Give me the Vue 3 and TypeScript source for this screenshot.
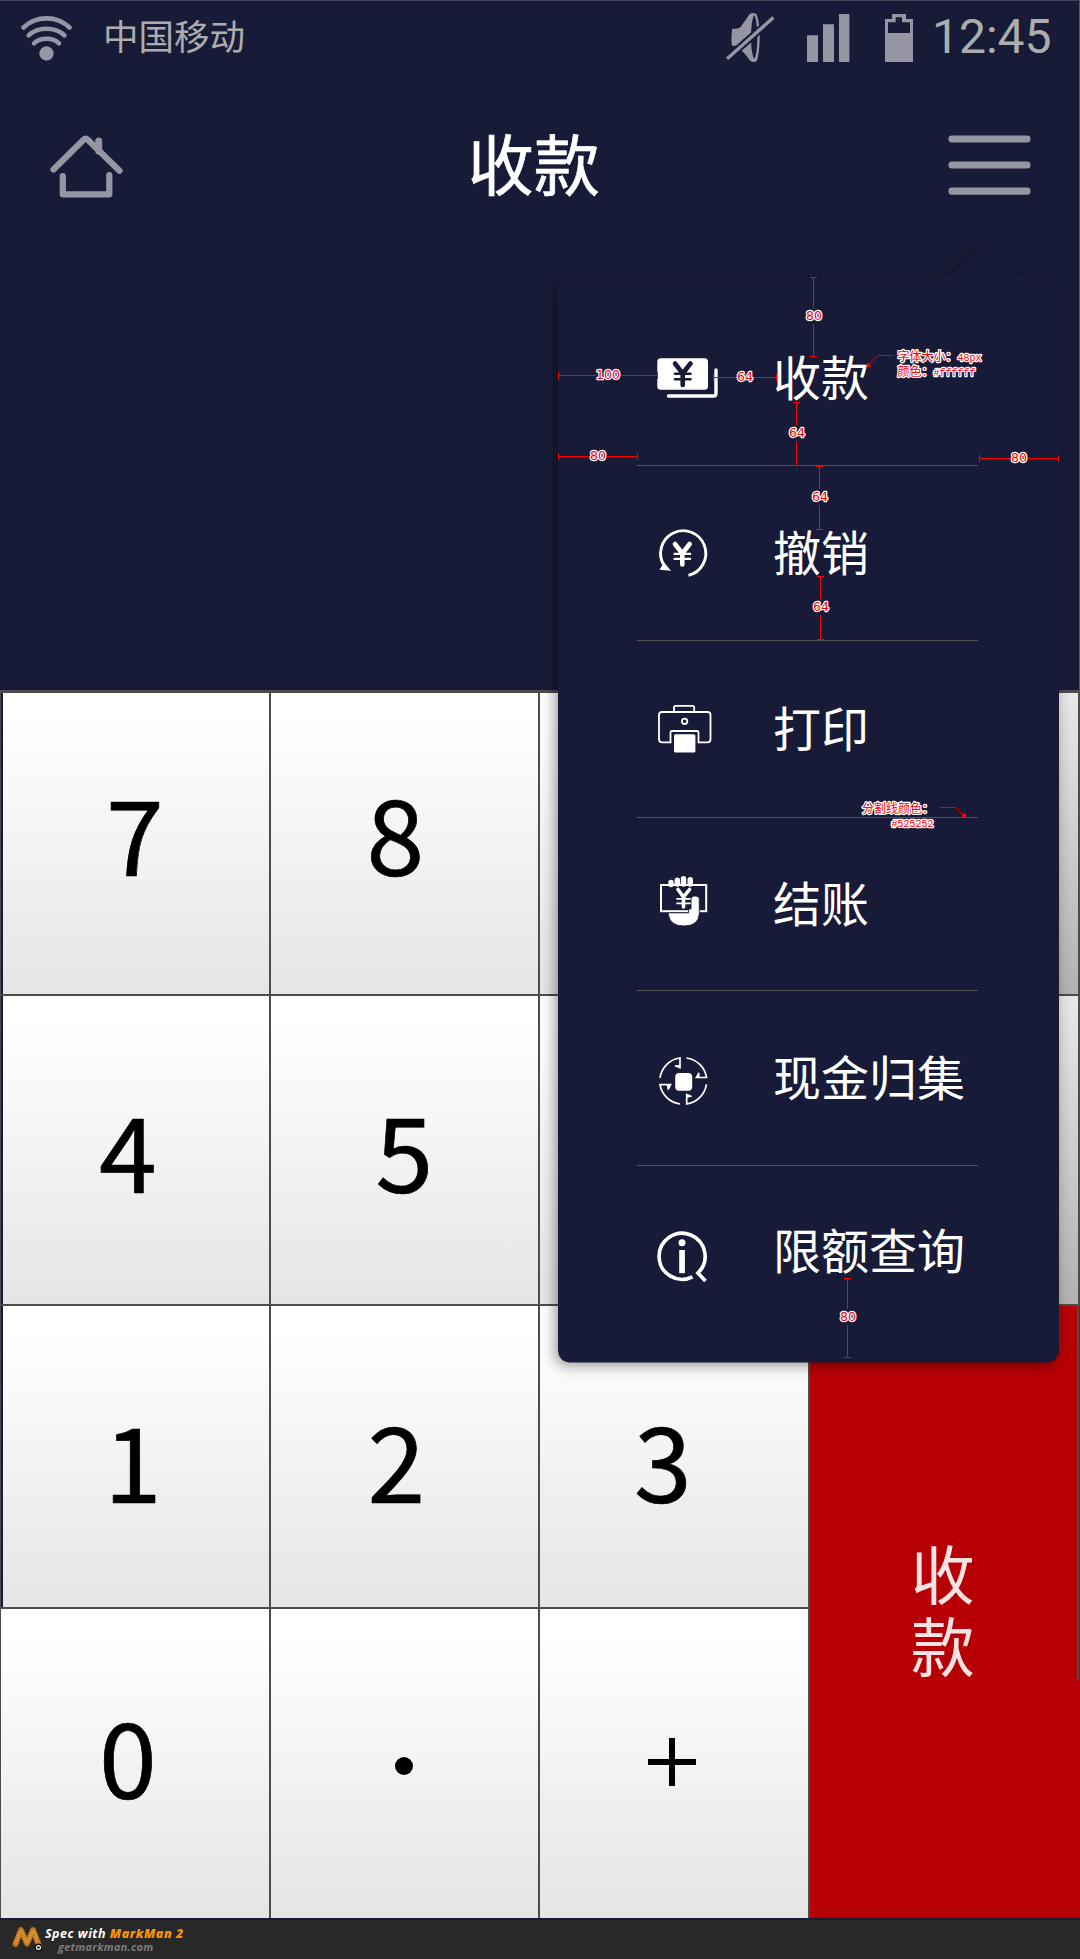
<script setup lang="ts">
type MenuIcon = 'cash' | 'undo' | 'print' | 'settle' | 'collect' | 'query'

interface MenuEntry {
  icon: MenuIcon
  label: string
  top: number
  height: number
}

interface KeyCell {
  label: string
  dx: number
  dy: number
  kind?: 'dot' | 'plus' | 'grey' | 'blank'
}

interface Measure {
  x1: number
  y1: number
  x2: number
  y2: number
  text: string
  cx: number
  cy: number
}

const menu: MenuEntry[] = [
  { icon: 'cash', label: '收款', top: 278, height: 187 },
  { icon: 'undo', label: '撤销', top: 466, height: 174 },
  { icon: 'print', label: '打印', top: 641, height: 176 },
  { icon: 'settle', label: '结账', top: 818, height: 172 },
  { icon: 'collect', label: '现金归集', top: 991, height: 174 },
  { icon: 'query', label: '限额查询', top: 1166, height: 196 },
]

const upperKeys: KeyCell[] = [
  { label: '7', dx: -1, dy: -6 },
  { label: '8', dx: -9, dy: -6 },
  { label: '', dx: 0, dy: 0, kind: 'blank' },
  { label: '', dx: 0, dy: 0, kind: 'grey' },
  { label: '4', dx: -8, dy: 5 },
  { label: '5', dx: 0, dy: 5 },
  { label: '', dx: 0, dy: 0, kind: 'blank' },
  { label: '', dx: 0, dy: 0, kind: 'grey' },
]

const lowerKeys: KeyCell[] = [
  { label: '1', dx: -3, dy: 8 },
  { label: '2', dx: -8, dy: 8 },
  { label: '3', dx: -11, dy: 8 },
  { label: '0', dx: -7, dy: -3 },
  { label: '', dx: 0, dy: 0, kind: 'dot' },
  { label: '', dx: 0, dy: 0, kind: 'plus' },
]

const measures: Measure[] = [
  { x1: 813.5, y1: 277.5, x2: 813.5, y2: 356.5, text: '80', cx: 814, cy: 315 },
  { x1: 558.5, y1: 375.5, x2: 657.5, y2: 375.5, text: '100', cx: 608, cy: 374 },
  { x1: 713.5, y1: 377.5, x2: 776.5, y2: 377.5, text: '64', cx: 745, cy: 376 },
  { x1: 796.5, y1: 402.5, x2: 796.5, y2: 465.5, text: '64', cx: 797, cy: 432 },
  { x1: 558.5, y1: 456.5, x2: 637.5, y2: 456.5, text: '80', cx: 598, cy: 455 },
  { x1: 979.5, y1: 458.5, x2: 1058.5, y2: 458.5, text: '80', cx: 1019, cy: 457 },
  { x1: 819.5, y1: 466.5, x2: 819.5, y2: 529.5, text: '64', cx: 820, cy: 496 },
  { x1: 820.5, y1: 576.5, x2: 820.5, y2: 639.5, text: '64', cx: 821, cy: 606 },
  { x1: 847.5, y1: 1278.5, x2: 847.5, y2: 1357.5, text: '80', cx: 848, cy: 1316 },
]

function measurePath(m: Measure): string {
  if (m.x1 === m.x2) {
    const caps = `M${m.x1 - 3.5} ${m.y1}h7M${m.x1 - 3.5} ${m.y2}h7`
    return `${caps}M${m.x1} ${m.y1}V${m.cy - 7}M${m.x1} ${m.cy + 9}V${m.y2}`
  }
  const half = m.text.length * 4
  const caps = `M${m.x1} ${m.y1 - 3.5}v7M${m.x2} ${m.y1 - 3.5}v7`
  return `${caps}M${m.x1} ${m.y1}H${m.cx - half}M${m.cx + half} ${m.y1}H${m.x2}`
}

function nudge(k: KeyCell): Record<string, string> {
  return { marginLeft: `${k.dx * 2}px`, marginTop: `${k.dy * 2 - 14}px` }
}
</script>

<template>
  <div class="screen">
    <header class="top">
      <div class="status">
        <svg class="wifi" width="52" height="50" viewBox="20 13 52 50" fill="none" stroke="#9595a3" stroke-width="4.6" stroke-linecap="round">
          <path d="M23.5 27.5Q33 18.4 46.5 18.4T69.5 27.5" />
          <path d="M28.7 35.3Q35.5 28.7 46.5 28.7T64.4 35.3" />
          <path d="M34 43.3Q38.5 38.7 46.5 38.7T59 43.3" />
          <circle cx="46.5" cy="53.5" r="7.2" fill="#9595a3" stroke="none" />
        </svg>
        <span class="carrier">中国移动</span>
        <svg class="signals" width="190" height="52" viewBox="725 10 190 52" fill="#9595a3">
          <g transform="translate(540 0) scale(.34435 .3333)">
            <path fill-rule="evenodd" d="M558 80Q572 82 582 76Q597 54 609 36Q622 29 630 38Q638 64 638 106Q638 150 630 176Q620 184 610 176Q600 160 589 149L566 130Q555 140 556 112Q556 92 558 80ZM622 40C616 48 613 76 613 106C613 142 617 162 622 170C628 162 631 142 631 106C631 76 628 48 622 40Z" />
            <path d="M538 175L684 41" stroke="#181b37" stroke-width="22" />
            <path d="M547 167L674 50" stroke="#9595a3" stroke-width="10" stroke-linecap="square" />
          </g>
          <path d="M807 33.3h11V60h-11zM823 22.3h11V60h-11zM839 12h10.4v48H839z" />
          <path fill-rule="evenodd" d="M885 17h7v-5h14v5h7v43h-28zM888 20.3V31h22V20.3h-8v-5h-6.3v5z" />
        </svg>
        <span class="clock">12:45</span>
      </div>
      <nav class="nav">
        <svg width="74" height="66" viewBox="49 133 74 66" fill="none" stroke="#9595a3" stroke-width="6.2" stroke-linecap="round" stroke-linejoin="round">
          <path d="M53.5 169.5L83.6 139.8Q85.7 137.8 87.8 139.8L119.5 170.8" />
          <path d="M98.7 141V151" stroke-width="7" />
          <path d="M62.8 176.2V194.3H109.3V175.2" />
        </svg>
        <h1>收款</h1>
        <svg width="83" height="62" viewBox="948.5 134 83 62" fill="#9595a3">
          <rect x="949" y="134.5" width="82" height="7" rx="3.3" />
          <rect x="949" y="160.5" width="82" height="7" rx="3.3" />
          <rect x="949" y="186.5" width="82" height="7.2" rx="3.3" />
        </svg>
      </nav>
    </header>

    <main class="keypad">
      <div class="upper">
        <button v-for="(k, i) in upperKeys" :key="i" class="key" :class="[k.kind, { first: i % 4 === 0 }]">
          <span v-if="k.label" :style="nudge(k)">{{ k.label }}</span>
        </button>
      </div>
      <div class="lower">
        <div class="digits">
          <button v-for="(k, i) in lowerKeys" :key="i" class="key" :class="[k.kind, { first: i === 0 }]">
            <svg v-if="k.kind === 'dot'" width="20" height="20" viewBox="0 0 20 20"><circle cx="10" cy="10" r="9" /></svg>
            <svg v-else-if="k.kind === 'plus'" width="48" height="48" viewBox="0 0 48 48"><path d="M0 24H48M24 0V48" stroke="#000" stroke-width="6" /></svg>
            <span v-else :style="nudge(k)">{{ k.label }}</span>
          </button>
        </div>
        <button class="pay"><span>收</span><span>款</span></button>
      </div>
    </main>

    <footer class="credit">
      <svg width="32" height="29" viewBox="0 0 32 29" fill="none" stroke-linecap="round">
        <path d="M3.500 19L9 5L15 18.500L21 5L27.500 22" stroke="#6e3f0c" stroke-width="6.600" stroke-linejoin="round" />
        <path d="M3.500 19L9 5L15 18.500L21 5L27.500 22" stroke="#c07a22" stroke-width="5.200" stroke-linejoin="round" />
        <path d="M3.500 18L8.500 6M9.500 6L14.500 18M15.500 18L20.500 6M21.500 6L26.500 18" stroke="#e9aa52" stroke-width="3" stroke-linecap="butt" stroke-dasharray="1 1.500" />
        <circle cx="26.500" cy="22.500" r="3.200" fill="#fff" stroke="#111" stroke-width="1.400" />
        <circle cx="26.500" cy="22.500" r="1.300" fill="#111" />
      </svg>
      <div class="credit-text">
        <p class="spec">Spec with <b>MarkMan 2</b></p>
        <p class="site">getmarkman.com</p>
      </div>
    </footer>

    <section class="popover">
      <svg class="bubble" width="501" height="1118" viewBox="558 245 501 1118">
        <path fill="#181b37" d="M572 278H937C949 278 955 271 964 263L979 250.500Q985 246.500 991 250.500L1007 264C1014 271 1018 278 1029 278H1045Q1059 278 1059 292V1349Q1059 1362.600 1045 1362.600H572Q558 1362.600 558 1349V292Q558 278 572 278Z" />
      </svg>
      <ul class="menu">
        <li v-for="m in menu" :key="m.icon" :class="m.icon" :style="{ height: `${m.height}px` }">
          <svg width="120" :height="m.height" :viewBox="`638 ${m.top} 120 ${m.height}`" fill="none" stroke="#fff" stroke-linecap="round">
            <template v-if="m.icon === 'cash'">
              <rect x="657.3" y="358.300" width="50.700" height="31.400" rx="3.500" fill="#fff" stroke="none" />
              <path d="M675 363.500L682.700 373.500L690.500 363.500M682.700 374V385" stroke="#181b37" stroke-width="4.600" />
              <path d="M675 373.800H690.500M675 379.200H690.500" stroke="#181b37" stroke-width="2.600" />
              <path d="M716 370V393.500Q716 396 713.500 396H668.500" stroke-width="3.400" />
            </template>
            <template v-else-if="m.icon === 'undo'">
              <path d="M688.500 575.300A22.600 22.600 0 1 0 664.500 566" stroke-width="2.900" stroke-linecap="butt" />
              <path d="M659.500 569.700L664 562.500L671 570.700Z" fill="#fff" stroke="none" />
              <path d="M675 544L682.300 553.500L689.700 544M682.300 554V564.500" stroke-width="4.600" />
              <path d="M674.500 553.800H690.200M674.500 558.800H690.200" stroke-width="2.200" />
            </template>
            <template v-else-if="m.icon === 'print'">
              <path d="M670.500 742.300H662Q659 742.300 659 739.300V715Q659 712 662 712H707.500Q710.500 712 710.500 715V739.300Q710.500 742.300 707.500 742.300H698.500V732.500Q698.500 731 697 731H672Q670.500 731 670.500 732.500ZM674 711.500V707.500Q674 705.800 675.500 705.800H692.500Q694.200 705.800 694.200 707.500V711.500" stroke-width="1.800" />
              <circle cx="684.600" cy="721.300" r="2.700" stroke-width="1.800" />
              <rect x="674" y="734.300" width="21.400" height="18.300" rx="1.500" fill="#fff" stroke="none" />
            </template>
            <template v-else-if="m.icon === 'settle'">
              <path d="M671 884.500V882.500M677.300 884V880.300M683.500 884V878.600M690.200 884V879.600" stroke-width="5.400" />
              <rect x="661" y="885" width="45.200" height="26.200" stroke-width="2" stroke-linejoin="miter" />
              <path d="M668.300 912.800H688.500V909H691V899.500Q691 896 695.200 896Q699.300 896 699.300 899.500V914Q698.300 926 684 926Q669.500 926 668.300 914Z" fill="#fff" stroke="#181b37" stroke-width=".9" />
              <path d="M678 889.500L683.500 897L689.500 889.500M683.500 897V907" stroke-width="3.600" />
              <path d="M677 898.800H690M677 903.300H690" stroke-width="1.800" />
            </template>
            <template v-else-if="m.icon === 'collect'">
              <path d="M660 1078A23.300 23.300 0 0 1 680 1058V1067.500L675 1065.800M686.500 1058A23.300 23.300 0 0 1 706.500 1077.500H696.500L699.300 1073M706.400 1084.300A23.300 23.300 0 0 1 686.700 1104V1094.800L691.500 1096.500M680 1104A23.300 23.300 0 0 1 660 1084.700H670.500L668 1089.500" stroke-width="1.700" stroke-linecap="butt" stroke-linejoin="miter" />
              <path d="M680 1068.500L674.500 1065.700L680 1064.700ZM695.500 1078L698.700 1072L700 1078ZM686.500 1093.500L692 1096.400L686.500 1098ZM671 1084.500L668 1090.500L666.500 1084.500Z" fill="#fff" stroke="none" />
              <rect x="675.200" y="1073" width="17" height="17.700" rx="4" fill="#fff" stroke="none" />
            </template>
            <template v-else>
              <path d="M692.500 1276.800A23 23 0 1 1 697.900 1273L705.500 1281" stroke-width="3.600" stroke-linecap="butt" stroke-linejoin="miter" />
              <circle cx="682" cy="1242.800" r="3.500" fill="#fff" stroke="none" />
              <path d="M679.200 1250h5.700v23.200h-5.700z" fill="#fff" stroke="none" />
            </template>
          </svg>
          <span>{{ m.label }}</span>
        </li>
      </ul>
    </section>

    <svg class="notes" width="1080" height="1959" viewBox="0 0 1080 1959">
      <g v-for="(m, i) in measures" :key="i">
        <path :d="measurePath(m)" fill="none" stroke="#f00" />
        <text class="num" :x="m.cx" :y="m.cy + 4.500" text-anchor="middle">{{ m.text }}</text>
      </g>
      <path d="M893 355.500H878L868.500 365M940 807.500H955.500L964 816" fill="none" stroke="#e00000" />
      <path d="M867 362L872 366L867 367.500ZM962 817.500L962.500 814L966 813V817.500Z" fill="#f00" />
      <text class="cn" x="897.500" y="361">字体大小：<tspan class="code">48px</tspan></text>
      <text class="cn" x="897.500" y="375.500">颜色：<tspan class="code">#ffffff</tspan></text>
      <text class="cn" x="862" y="812.500">分割线颜色：</text>
      <text class="cn" x="891.500" y="827"><tspan class="code">#525252</tspan></text>
    </svg>
  </div>
</template>

<style>
body {
  margin: 0;
}
</style>

<style scoped>
.screen {
  position: relative;
  width: 1080px;
  height: 1959px;
  overflow: hidden;
  display: flex;
  flex-direction: column;
  background: #181b37;
  color: #fff;
  font-family: "Noto Sans CJK SC", sans-serif;
}
.top {
  box-sizing: border-box;
  height: 690px;
  border-top: 1px solid #41435a;
  border-right: 1px solid #55576b;
}
.status {
  display: flex;
  align-items: center;
  height: 73px;
  padding-left: 20px;
}
.carrier {
  margin: -5px 0 0 31px;
  width: 161px;
  font-size: 35.500px;
  line-height: 40px;
  color: #adadad;
}
.signals {
  margin-left: 461px;
}
.clock {
  margin: -2px 0 0 17px;
  font: 48px/56px Roboto, sans-serif;
  color: #adadad;
}
.nav {
  display: flex;
  align-items: center;
  justify-content: space-between;
  height: 66px;
  margin-top: 59px;
  padding: 0 48.500px 0 49px;
}
h1 {
  margin: -11px 0 0 -3px;
  font-size: 66px;
  line-height: 66px;
  font-weight: 400;
  -webkit-text-stroke: 0.7px #fff;
}
.keypad {
  border-top: 3px solid #4c4c4c;
  height: 1225px;
  background: #4c4c4c;
  padding-left: 1px;
  border-bottom: 2px solid #181b37;
}
.upper {
  display: grid;
  grid-template-columns: 267.500px 267.500px 267.500px 268px;
  grid-template-rows: 301px 308px;
  gap: 2px;
}
.key {
  display: flex;
  align-items: center;
  justify-content: center;
  padding: 0;
  border: 0;
  background: linear-gradient(#fff 8%, #e5e5e5);
  color: #000;
  font: 104px/120px "Noto Sans CJK SC", sans-serif;
  -webkit-text-stroke: 0.7px #000;
}
.key.first {
  border-left: 2px solid #181b37;
}
.key.grey {
  background: linear-gradient(#e8e8e8, #b2b2b2);
}
.key.dot svg {
  margin-top: 4px;
}
.key.plus svg {
  margin: -4px 0 0 -4px;
}
.lower {
  display: flex;
  gap: 2px;
  padding-top: 2px;
}
.digits {
  display: grid;
  grid-template-columns: 267.500px 267.500px 267.500px;
  grid-template-rows: 301px 309px;
  gap: 2px;
}
.pay {
  width: 271px;
  padding: 0 4px 11px 0;
  border: 0;
  background: linear-gradient(#4c4c4c, #4c4c4c) right 1px top 0 / 2px 374px no-repeat #b70005;
  color: #f8e2e2;
  display: flex;
  flex-direction: column;
  align-items: center;
  justify-content: center;
  font: 400 64px/72px "Noto Sans CJK SC", sans-serif;
}
.credit {
  display: flex;
  flex: 1;
  align-items: center;
  background: #282828;
  padding-left: 12px;
}
.credit-text {
  margin-left: 1px;
  font: italic bold 12.500px/14px "Open Sans", sans-serif;
  letter-spacing: 0.5px;
}
.credit-text p {
  margin: 0;
}
.spec b {
  color: #f7920a;
}
.credit-text .site {
  margin-left: 13px;
  font-size: 11px;
  line-height: 12px;
  letter-spacing: 0.25px;
  color: #7b7b7b;
}
.popover {
  position: absolute;
  left: 558px;
  top: 278px;
  width: 501px;
}
.bubble {
  position: absolute;
  left: 0;
  top: -33px;
  overflow: visible;
  filter: drop-shadow(-3px 3px 7px rgba(0, 0, 0, 0.4));
}
.menu {
  position: relative;
  margin: 0;
  padding: 0 81px 0 79px;
  list-style: none;
}
.menu li {
  display: flex;
  align-items: center;
  border-bottom: 1px solid #525252;
}
.menu li:last-child {
  border-bottom: 0;
}
.menu svg {
  margin-left: 1px;
  flex: none;
}
.menu span {
  margin: -6px 0 0 15px;
  font-size: 48px;
  line-height: 50px;
  white-space: nowrap;
}
.menu .cash span {
  margin-top: 7px;
}
.menu .query span {
  margin-top: -32px;
}
.notes {
  position: absolute;
  left: 0;
  top: 0;
}
.notes text {
  fill: #f00;
  stroke: #fff;
  stroke-width: 2.500px;
  stroke-linejoin: round;
  paint-order: stroke;
}
.num {
  font: 12.500px "DejaVu Sans", sans-serif;
}
.cn {
  font: 12px "Noto Sans CJK SC", sans-serif;
}
.code {
  font: 10px "Liberation Mono", monospace;
}
</style>
